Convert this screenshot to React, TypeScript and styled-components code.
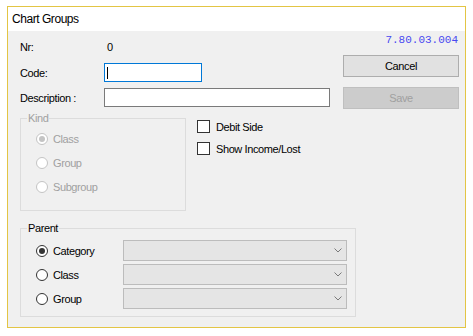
import styled, { createGlobalStyle } from 'styled-components'

const GlobalStyle = createGlobalStyle`
  html, body {
    margin: 0;
    background: #ffffff;
  }
  body {
    font-family: "Liberation Sans", Arial, sans-serif;
    font-size: 11px;
    letter-spacing: -0.4px;
    color: #000;
  }
`

const Window = styled.div`
  margin: 6px 0 0 7px;
  width: 459px;
  height: 322px;
  box-sizing: border-box;
  border: 1px solid #e3c544;
  background: #f0f0f0;
  display: flex;
  flex-direction: column;
`

const TitleBar = styled.div`
  height: 24px;
  background: #ffffff;
  display: flex;
  align-items: center;
  padding-left: 4px;
  font-size: 12px;
  letter-spacing: -0.45px;
`

const Body = styled.div`
  flex: 1;
  padding: 0 6px 0 12px;
  display: flex;
  flex-direction: column;
`

const TopSection = styled.div`
  display: flex;
`

const FormPane = styled.div`
  flex: 1;
  padding-top: 8px;
  display: flex;
  flex-direction: column;
`

const FieldRow = styled.div<{ $gap: number; $height: number }>`
  display: flex;
  align-items: center;
  height: ${p => p.$height}px;
  margin-top: ${p => p.$gap}px;
`

const Label = styled.span`
  width: 84px;
`

const Value = styled.span`
  padding-left: 3px;
`

const TextBox = styled.div<{ $width: number; $focused?: boolean }>`
  width: ${p => p.$width}px;
  height: 19px;
  box-sizing: border-box;
  border: 1px solid ${p => (p.$focused ? '#0078d7' : '#7a7a7a')};
  background: #ffffff;
  display: flex;
  align-items: center;
  padding-left: 2px;
`

const Caret = styled.span`
  width: 1px;
  height: 12px;
  background: #000;
`

const OptionsRow = styled.div`
  display: flex;
  margin-top: 11px;
`

const GroupBox = styled.div<{ $width: number; $height: number; $padTop: number; $gap: number }>`
  position: relative;
  width: ${p => p.$width}px;
  height: ${p => p.$height}px;
  box-sizing: border-box;
  border: 1px solid #dcdcdc;
  padding: ${p => p.$padTop}px 0 0 15px;
  display: flex;
  flex-direction: column;
  gap: ${p => p.$gap}px;
`

const Legend = styled.span<{ $disabled?: boolean }>`
  position: absolute;
  top: -7px;
  left: 6px;
  padding: 0 1px;
  line-height: 13px;
  background: #f0f0f0;
  color: ${p => (p.$disabled ? '#a0a0a0' : '#000')};
`

const OptionRow = styled.div<{ $height: number; $disabled?: boolean }>`
  display: flex;
  align-items: center;
  height: ${p => p.$height}px;
  color: ${p => (p.$disabled ? '#a0a0a0' : '#000')};
`

const Radio = styled.span<{ $checked?: boolean; $disabled?: boolean }>`
  position: relative;
  flex: none;
  width: 12px;
  height: 12px;
  box-sizing: border-box;
  border-radius: 50%;
  border: 1px solid ${p => (p.$disabled ? '#c4c4c4' : '#333')};
  background: #ffffff;
  margin-right: 5px;

  &::after {
    content: '';
    display: ${p => (p.$checked ? 'block' : 'none')};
    position: absolute;
    left: 2px;
    top: 2px;
    width: 6px;
    height: 6px;
    border-radius: 50%;
    background: ${p => (p.$disabled ? '#c4c4c4' : '#333')};
  }
`

const RadioText = styled.span`
  width: 70px;
`

const CheckColumn = styled.div`
  margin-left: 11px;
  padding-top: 2px;
  display: flex;
  flex-direction: column;
  gap: 9px;
`

const CheckRow = styled.div`
  display: flex;
  align-items: center;
  height: 13px;
`

const CheckBox = styled.span`
  width: 13px;
  height: 13px;
  box-sizing: border-box;
  border: 1px solid #333;
  background: #ffffff;
  margin-right: 6px;
`

const SidePane = styled.div`
  width: 116px;
  display: flex;
  flex-direction: column;
`

const Version = styled.div`
  height: 18px;
  line-height: 18px;
  text-align: right;
  padding-right: 1px;
  font-family: "Liberation Mono", "Courier New", monospace;
  font-size: 11px;
  letter-spacing: 0;
  color: #4848f0;
`

const Button = styled.div<{ $disabled?: boolean; $gap: number }>`
  height: 22px;
  margin-top: ${p => p.$gap}px;
  box-sizing: border-box;
  display: flex;
  align-items: center;
  justify-content: center;
  background: ${p => (p.$disabled ? '#cccccc' : '#e1e1e1')};
  border: 1px solid ${p => (p.$disabled ? '#bfbfbf' : '#adadad')};
  color: ${p => (p.$disabled ? '#a0a0a0' : '#000')};
`

const Combo = styled.div`
  width: 224px;
  height: 21px;
  box-sizing: border-box;
  border: 1px solid #bcbcbc;
  background: #e5e5e5;
  display: flex;
  align-items: center;
  justify-content: flex-end;
  padding-right: 4px;
`

const ParentArea = styled.div`
  margin-top: 17px;
`

const Chevron = () => (
  <svg width="8" height="5" viewBox="0 0 8 5">
    <polyline points="0.5,0.5 4,4 7.5,0.5" fill="none" stroke="#7a7a7a" strokeWidth="1" />
  </svg>
)

const kinds = ['Class', 'Group', 'Subgroup']
const parents = ['Category', 'Class', 'Group']

export default function App() {
  return (
    <>
      <GlobalStyle />
      <Window>
        <TitleBar>Chart Groups</TitleBar>
        <Body>
          <TopSection>
            <FormPane>
              <FieldRow $gap={0} $height={16}>
                <Label>Nr:</Label>
                <Value>0</Value>
              </FieldRow>
              <FieldRow $gap={8} $height={19}>
                <Label>Code:</Label>
                <TextBox $width={98} $focused>
                  <Caret />
                </TextBox>
              </FieldRow>
              <FieldRow $gap={6} $height={19}>
                <Label>Description :</Label>
                <TextBox $width={226} />
              </FieldRow>
              <OptionsRow>
                <GroupBox $width={166} $height={93} $padTop={12} $gap={8}>
                  <Legend $disabled>Kind</Legend>
                  {kinds.map((k, i) => (
                    <OptionRow key={k} $height={16} $disabled>
                      <Radio $disabled $checked={i === 0} />
                      <span>{k}</span>
                    </OptionRow>
                  ))}
                </GroupBox>
                <CheckColumn>
                  <CheckRow>
                    <CheckBox />
                    Debit Side
                  </CheckRow>
                  <CheckRow>
                    <CheckBox />
                    Show Income/Lost
                  </CheckRow>
                </CheckColumn>
              </OptionsRow>
            </FormPane>
            <SidePane>
              <Version>7.80.03.004</Version>
              <Button $gap={6}>Cancel</Button>
              <Button $gap={10} $disabled>Save</Button>
            </SidePane>
          </TopSection>
          <ParentArea>
            <GroupBox $width={336} $height={89} $padTop={11} $gap={3}>
              <Legend>Parent</Legend>
              {parents.map((p, i) => (
                <OptionRow key={p} $height={21}>
                  <Radio $checked={i === 0} />
                  <RadioText>{p}</RadioText>
                  <Combo>
                    <Chevron />
                  </Combo>
                </OptionRow>
              ))}
            </GroupBox>
          </ParentArea>
        </Body>
      </Window>
    </>
  )
}
